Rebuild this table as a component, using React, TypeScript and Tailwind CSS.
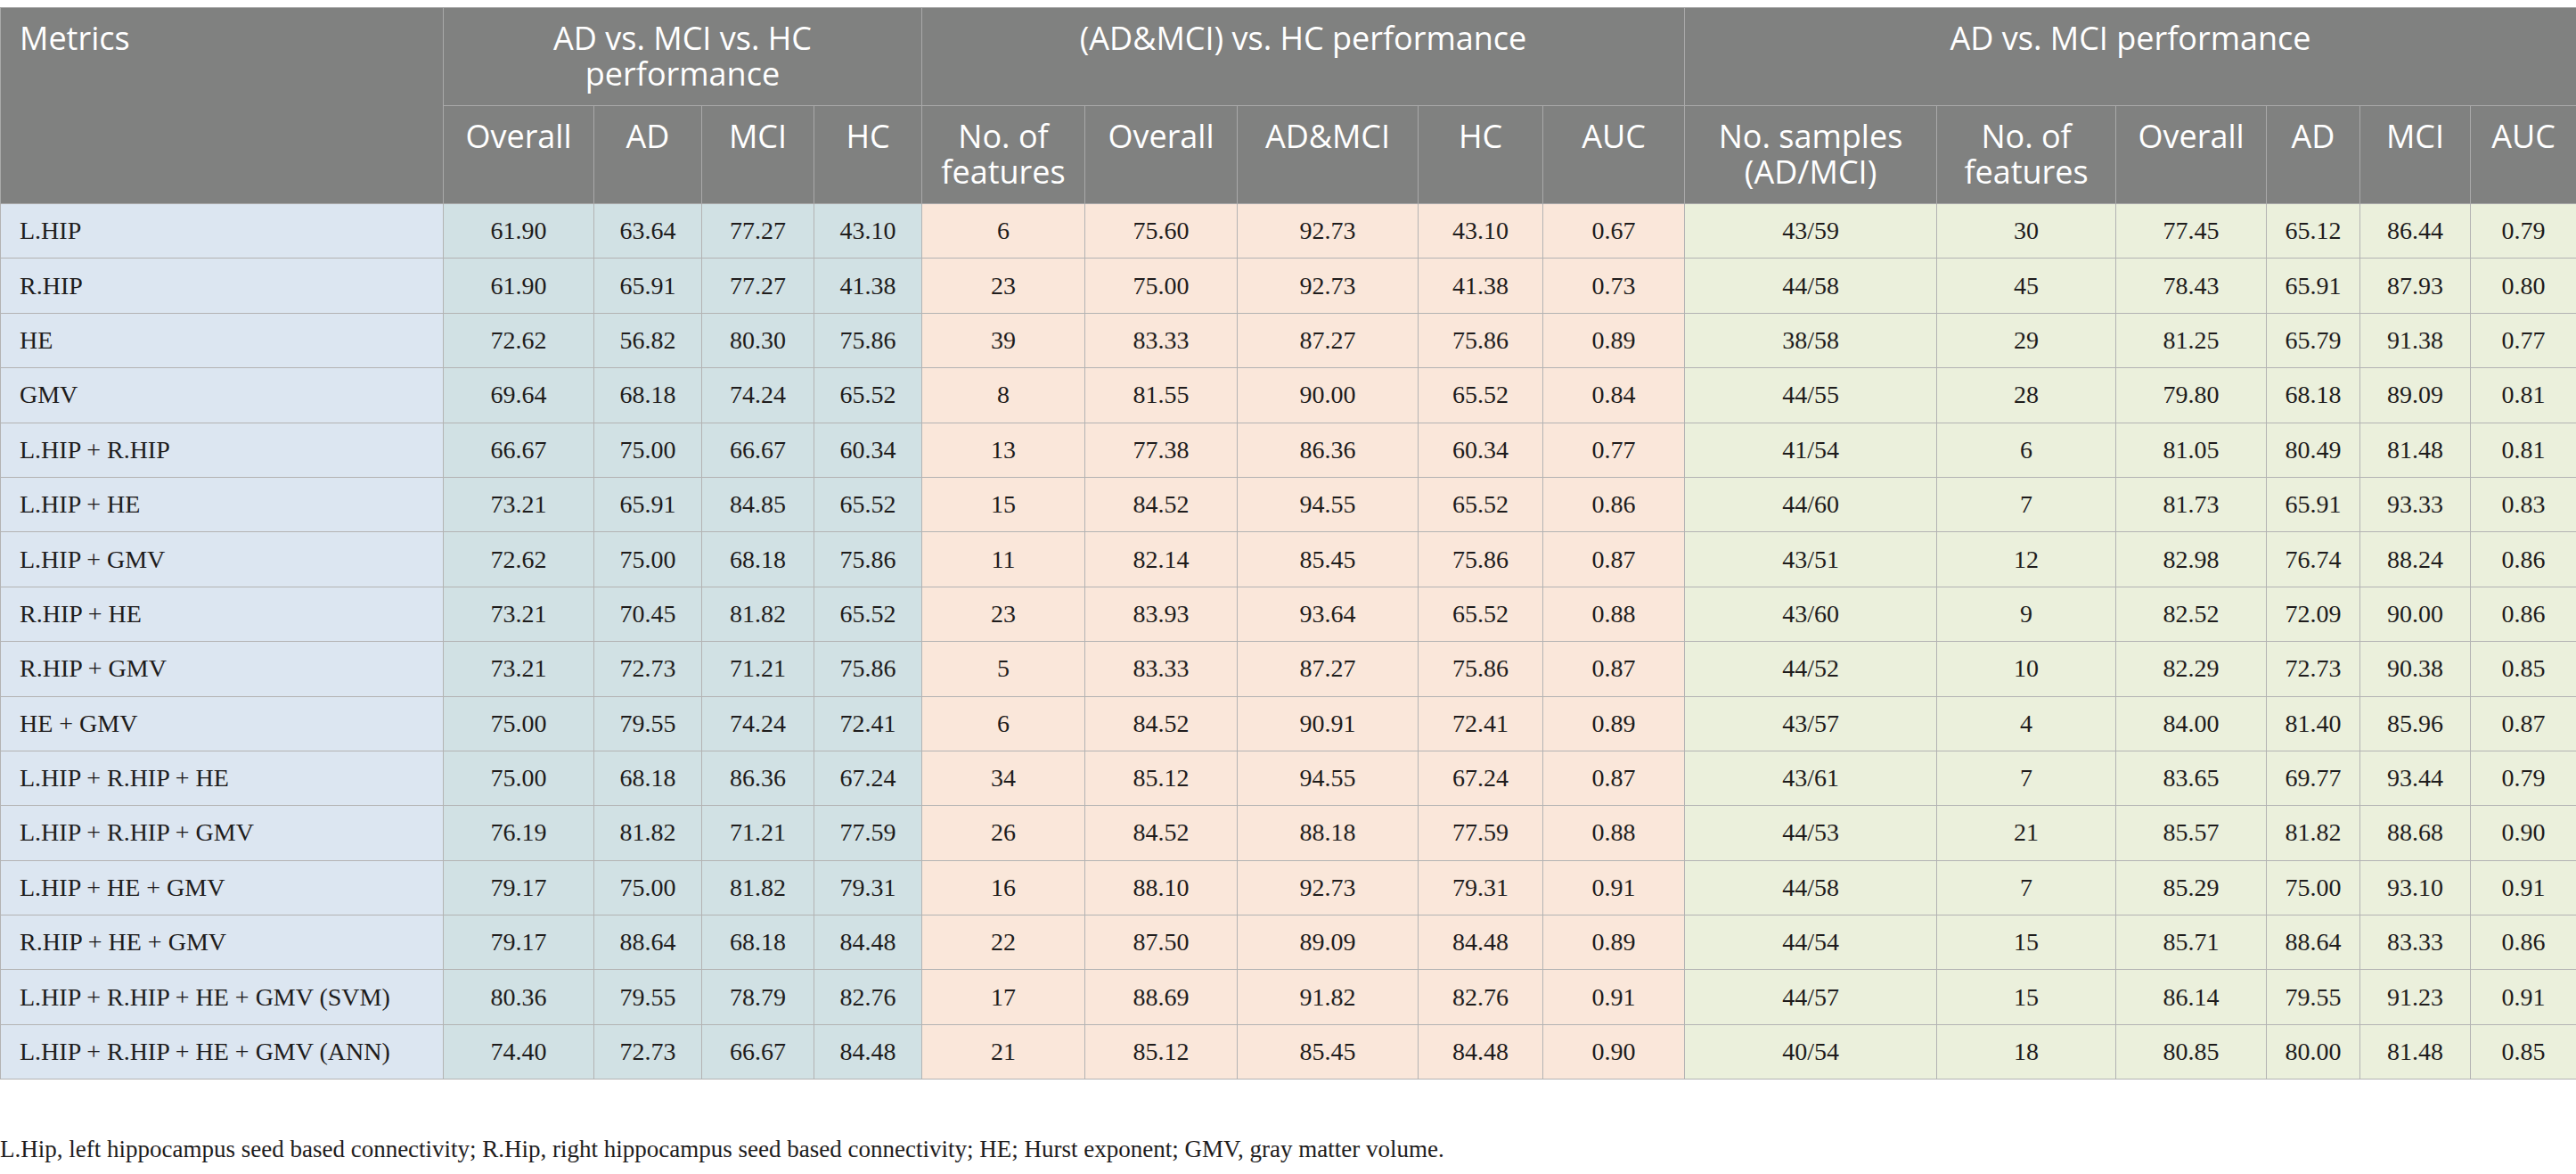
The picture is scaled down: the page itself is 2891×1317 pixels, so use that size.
import React from "react";

// column widths measured off the original table
const colWidths = [
  "w-[497px]",
  "w-[169px]", "w-[121px]", "w-[126px]", "w-[121px]",
  "w-[183px]", "w-[171px]", "w-[203px]", "w-[140px]", "w-[159px]",
  "w-[283px]", "w-[201px]", "w-[169px]", "w-[105px]", "w-[124px]", "w-[119px]",
];

type Row = {
  metric: string;
  three: string[]; // AD vs. MCI vs. HC
  adMci: string[]; // (AD&MCI) vs. HC
  adVsMci: string[]; // AD vs. MCI
};

const rows: Row[] = [
  { metric: "L.HIP", three: ["61.90", "63.64", "77.27", "43.10"], adMci: ["6", "75.60", "92.73", "43.10", "0.67"], adVsMci: ["43/59", "30", "77.45", "65.12", "86.44", "0.79"] },
  { metric: "R.HIP", three: ["61.90", "65.91", "77.27", "41.38"], adMci: ["23", "75.00", "92.73", "41.38", "0.73"], adVsMci: ["44/58", "45", "78.43", "65.91", "87.93", "0.80"] },
  { metric: "HE", three: ["72.62", "56.82", "80.30", "75.86"], adMci: ["39", "83.33", "87.27", "75.86", "0.89"], adVsMci: ["38/58", "29", "81.25", "65.79", "91.38", "0.77"] },
  { metric: "GMV", three: ["69.64", "68.18", "74.24", "65.52"], adMci: ["8", "81.55", "90.00", "65.52", "0.84"], adVsMci: ["44/55", "28", "79.80", "68.18", "89.09", "0.81"] },
  { metric: "L.HIP + R.HIP", three: ["66.67", "75.00", "66.67", "60.34"], adMci: ["13", "77.38", "86.36", "60.34", "0.77"], adVsMci: ["41/54", "6", "81.05", "80.49", "81.48", "0.81"] },
  { metric: "L.HIP + HE", three: ["73.21", "65.91", "84.85", "65.52"], adMci: ["15", "84.52", "94.55", "65.52", "0.86"], adVsMci: ["44/60", "7", "81.73", "65.91", "93.33", "0.83"] },
  { metric: "L.HIP + GMV", three: ["72.62", "75.00", "68.18", "75.86"], adMci: ["11", "82.14", "85.45", "75.86", "0.87"], adVsMci: ["43/51", "12", "82.98", "76.74", "88.24", "0.86"] },
  { metric: "R.HIP + HE", three: ["73.21", "70.45", "81.82", "65.52"], adMci: ["23", "83.93", "93.64", "65.52", "0.88"], adVsMci: ["43/60", "9", "82.52", "72.09", "90.00", "0.86"] },
  { metric: "R.HIP + GMV", three: ["73.21", "72.73", "71.21", "75.86"], adMci: ["5", "83.33", "87.27", "75.86", "0.87"], adVsMci: ["44/52", "10", "82.29", "72.73", "90.38", "0.85"] },
  { metric: "HE + GMV", three: ["75.00", "79.55", "74.24", "72.41"], adMci: ["6", "84.52", "90.91", "72.41", "0.89"], adVsMci: ["43/57", "4", "84.00", "81.40", "85.96", "0.87"] },
  { metric: "L.HIP + R.HIP + HE", three: ["75.00", "68.18", "86.36", "67.24"], adMci: ["34", "85.12", "94.55", "67.24", "0.87"], adVsMci: ["43/61", "7", "83.65", "69.77", "93.44", "0.79"] },
  { metric: "L.HIP + R.HIP + GMV", three: ["76.19", "81.82", "71.21", "77.59"], adMci: ["26", "84.52", "88.18", "77.59", "0.88"], adVsMci: ["44/53", "21", "85.57", "81.82", "88.68", "0.90"] },
  { metric: "L.HIP + HE + GMV", three: ["79.17", "75.00", "81.82", "79.31"], adMci: ["16", "88.10", "92.73", "79.31", "0.91"], adVsMci: ["44/58", "7", "85.29", "75.00", "93.10", "0.91"] },
  { metric: "R.HIP + HE + GMV", three: ["79.17", "88.64", "68.18", "84.48"], adMci: ["22", "87.50", "89.09", "84.48", "0.89"], adVsMci: ["44/54", "15", "85.71", "88.64", "83.33", "0.86"] },
  { metric: "L.HIP + R.HIP + HE + GMV (SVM)", three: ["80.36", "79.55", "78.79", "82.76"], adMci: ["17", "88.69", "91.82", "82.76", "0.91"], adVsMci: ["44/57", "15", "86.14", "79.55", "91.23", "0.91"] },
  { metric: "L.HIP + R.HIP + HE + GMV (ANN)", three: ["74.40", "72.73", "66.67", "84.48"], adMci: ["21", "85.12", "85.45", "84.48", "0.90"], adVsMci: ["40/54", "18", "80.85", "80.00", "81.48", "0.85"] },
];

const th = "border border-[#a9a9a9] align-top text-center font-normal px-2 pt-[14px]";
const td = "border border-[#b3b3b3] text-center align-middle p-0";

const App: React.FC = () => {
  return (
    <div className="w-[2891px] bg-white pt-[8px]">
      <table className="w-full table-fixed border-collapse">
        <colgroup>
          {colWidths.map((w, i) => (
            <col key={i} className={w} />
          ))}
        </colgroup>
        <thead className="bg-[#808180] text-white font-['Open_Sans',sans-serif] text-[36px] leading-[40px]">
          <tr className="h-[110px]">
            <th rowSpan={2} className={`${th} text-left pl-[21px]`}>
              Metrics
            </th>
            <th colSpan={4} className={th}>
              AD vs. MCI vs. HC
              <br />
              performance
            </th>
            <th colSpan={5} className={th}>
              (AD&amp;MCI) vs. HC performance
            </th>
            <th colSpan={6} className={th}>
              AD vs. MCI performance
            </th>
          </tr>
          <tr className="h-[110px]">
            <th className={th}>Overall</th>
            <th className={th}>AD</th>
            <th className={th}>MCI</th>
            <th className={th}>HC</th>
            <th className={th}>
              No. of
              <br />
              features
            </th>
            <th className={th}>Overall</th>
            <th className={th}>AD&amp;MCI</th>
            <th className={th}>HC</th>
            <th className={th}>AUC</th>
            <th className={th}>
              No. samples
              <br />
              (AD/MCI)
            </th>
            <th className={th}>
              No. of
              <br />
              features
            </th>
            <th className={th}>Overall</th>
            <th className={th}>AD</th>
            <th className={th}>MCI</th>
            <th className={th}>AUC</th>
          </tr>
        </thead>
        <tbody className="font-['Liberation_Serif',serif] text-[28px] text-[#1e1c1c]">
          {rows.map((r) => (
            <tr key={r.metric} className="h-[61.4px]">
              <td className={`${td} bg-[#dce6f1] text-left pl-[21px]`}>{r.metric}</td>
              {r.three.map((v, i) => (
                <td key={`a${i}`} className={`${td} bg-[#d1e1e4]`}>
                  {v}
                </td>
              ))}
              {r.adMci.map((v, i) => (
                <td key={`b${i}`} className={`${td} bg-[#fae7da]`}>
                  {v}
                </td>
              ))}
              {r.adVsMci.map((v, i) => (
                <td key={`c${i}`} className={`${td} bg-[#ebf0dc]`}>
                  {v}
                </td>
              ))}
            </tr>
          ))}
        </tbody>
      </table>
      <p className="mt-[62px] font-['Liberation_Serif',serif] text-[27px] leading-[32px] text-[#1e1c1c]">
        L.Hip, left hippocampus seed based connectivity; R.Hip, right hippocampus seed based connectivity; HE; Hurst
        exponent; GMV, gray matter volume.
      </p>
    </div>
  );
};

export default App;
